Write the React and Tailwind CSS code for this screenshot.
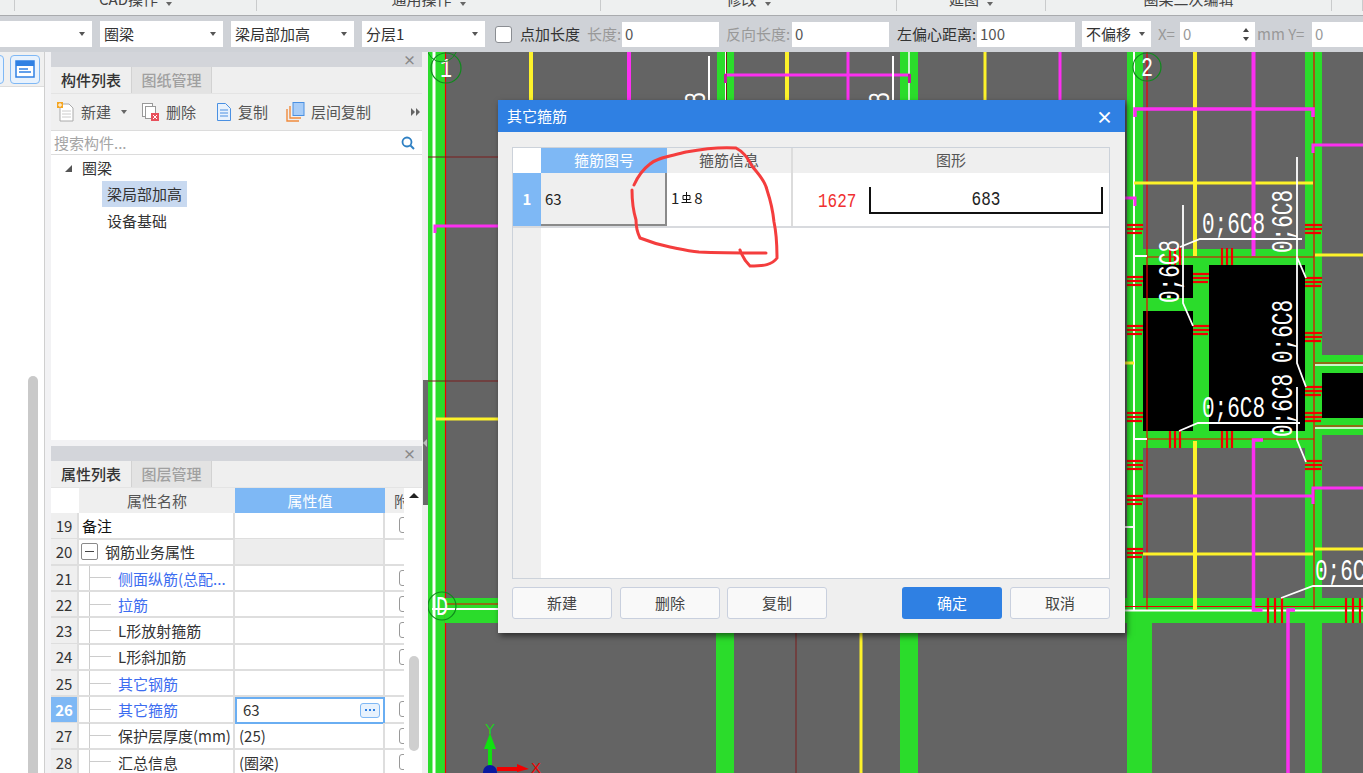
import React from 'react';

const GREEN = '#2bdc2b';
const GREY = '#646464';
const MAGENTA = '#fb2ff0';
const YELLOW = '#fdf22a';
const RED = '#f00000';
const DARKRED = '#7a1c1c';

const ToolSelect = ({ label, width }) => (
  <div className={`${width} h-[26px] bg-white flex items-center justify-between pl-1 pr-[7px] text-[15px] text-[#333] shrink-0`}>
    <span>{label}</span>
    <span className="w-0 h-0 border-x-[3px] border-x-transparent border-t-[4px] border-t-[#555]" />
  </div>
);

const ToolInput = ({ value, width }) => (
  <div className={`${width} h-[25px] bg-white flex items-center pl-[3px] text-[15px] text-[#555] shrink-0`}>{value}</div>
);

const Toolbar = () => (
  <div className="h-[37px] shrink-0 bg-[#cfd2d7] flex items-center border-t border-[#a9abae] text-[15px] whitespace-nowrap">
    <ToolSelect label="" width="w-[92px]" />
    <div className="w-2" />
    <ToolSelect label="圈梁" width="w-[123px]" />
    <div className="w-2" />
    <ToolSelect label="梁局部加高" width="w-[123px]" />
    <div className="w-2" />
    <ToolSelect label="分层1" width="w-[123px]" />
    <div className="w-[10px]" />
    <div className="w-[17px] h-[17px] bg-white border border-[#8a8d92] rounded-[3px] shrink-0" />
    <div className="w-[8px]" />
    <span className="w-[60px] text-[#333] shrink-0">点加长度</span>
    <span className="w-[42px] pl-[7px] text-[#999] shrink-0">长度:</span>
    <ToolInput value="0" width="w-[97px]" />
    <span className="w-[73px] pl-[7px] text-[#999] shrink-0">反向长度:</span>
    <ToolInput value="0" width="w-[97px]" />
    <span className="w-[88px] pl-[8px] text-[#333] shrink-0">左偏心距离:</span>
    <ToolInput value="100" width="w-[98px]" />
    <div className="w-[7px]" />
    <div className="w-[69px] h-[26px] bg-white flex items-center justify-between pl-1 pr-[6px] text-[#333] shrink-0">
      <span>不偏移</span>
      <span className="w-0 h-0 border-x-[3px] border-x-transparent border-t-[4px] border-t-[#555]" />
    </div>
    <span className="w-[29px] pl-[7px] text-[#999] shrink-0">X=</span>
    <div className="w-[75px] h-[25px] bg-white flex items-center justify-between pl-[3px] pr-[6px] text-[#999] shrink-0">
      <span>0</span>
      <span className="flex flex-col gap-[5px]">
        <span className="w-0 h-0 border-x-[3px] border-x-transparent border-b-[4px] border-b-[#444]" />
        <span className="w-0 h-0 border-x-[3px] border-x-transparent border-t-[4px] border-t-[#444]" />
      </span>
    </div>
    <span className="w-[57px] pl-[2px] text-[#999] shrink-0">mm Y=</span>
    <div className="flex-1 h-[25px] bg-white flex items-center pl-[3px] text-[#999]">0</div>
  </div>
);

const Ribbon = () => {
  const groups = [
    { w: 'w-[15px]', label: '' },
    { w: 'w-[242px]', label: 'CAD操作', caret: true },
    { w: 'w-[344px]', label: '通用操作', caret: true },
    { w: 'w-[296px]', label: '修改', caret: true },
    { w: 'w-[149px]', label: '延图', caret: true },
    { w: 'w-[286px]', label: '圈梁二次编辑' },
    { w: 'flex-1', label: '' },
  ];
  return (
    <div className="h-[15px] shrink-0 bg-[#eef0f0] flex overflow-hidden">
      {groups.map((g, i) => (
        <div key={i} className={`${g.w} h-[11px] border-r border-[#c9cbcc] flex justify-center gap-2 text-[15px] text-[#444] leading-[14px] overflow-visible`}>
          <span className="-mt-[8px]">{g.label}</span>
          {g.caret && <span className="w-0 h-0 mt-[2px] border-x-[3px] border-x-transparent border-t-[4px] border-t-[#666]" />}
        </div>
      ))}
    </div>
  );
};

const LeftRail = () => (
  <div className="w-[45px] shrink-0 bg-white border-r border-[#cfcfcf] flex flex-col">
    <div className="h-[35px] shrink-0 bg-[#f0f0f0] border-b border-[#ddd] flex items-center gap-[6px] -ml-[26px]">
      <div className="w-[30px] h-[29px] rounded-[4px] border border-[#7fb8f5] bg-[#e8f2fd] shrink-0" />
      <div className="w-[30px] h-[29px] rounded-[4px] border border-[#7fb8f5] bg-[#e8f2fd] shrink-0 flex items-center justify-center">
        <svg width="20" height="20" viewBox="0 0 20 20">
          <rect x="1" y="2" width="18" height="16" fill="#fff" stroke="#2f80e3" strokeWidth="1.5" />
          <rect x="1" y="2" width="18" height="5" fill="#2f80e3" />
          <path d="M4 10h9M4 13h12" stroke="#2f80e3" strokeWidth="1.5" />
        </svg>
      </div>
    </div>
    <div className="h-[289px] shrink-0" />
    <div className="flex-1 ml-[28px] w-[10px] bg-[#c9c9c9] rounded-t-[5px]" />
  </div>
);

const PanelHeader = () => (
  <div className="h-[15px] shrink-0 bg-[#d3d5da] flex items-center justify-end pr-[6px]">
    <span className="text-[13px] leading-none text-[#888] font-bold">×</span>
  </div>
);

const PanelTabs = ({ active, other }) => (
  <div className="h-[27px] shrink-0 bg-[#efefef] flex border-b border-[#e4e4e4] text-[15px]">
    <div className="w-[80px] flex items-center justify-center text-[#333] font-medium">{active}</div>
    <div className="w-[81px] bg-[#e3e3e3] border-x border-[#d2d2d2] flex items-center justify-center text-[#a0a0a0] font-medium">{other}</div>
  </div>
);

const NewIcon = () => (
  <svg width="18" height="20" viewBox="0 0 18 20">
    <path d="M3 2h9l4 4v13H3z" fill="#fff" stroke="#aaa" />
    <path d="M5 9h9M5 12h9M5 15h9" stroke="#ccc" />
    <rect x="0" y="0" width="6" height="6" fill="#f5a623" />
    <path d="M1 3h4M3 1v4" stroke="#fff" />
  </svg>
);

const DeleteIcon = () => (
  <svg width="18" height="20" viewBox="0 0 18 20">
    <rect x="0.5" y="1.5" width="10" height="13" fill="#fff" stroke="#999" />
    <rect x="3.5" y="4.5" width="10" height="12" fill="#fff" stroke="#999" />
    <rect x="9" y="11" width="8" height="8" fill="#e8505b" />
    <path d="M11 13l4 4M15 13l-4 4" stroke="#fff" />
  </svg>
);

const CopyIcon = () => (
  <svg width="16" height="20" viewBox="0 0 16 20">
    <path d="M1.5 1.5h8l5 5v12h-13z" fill="#e8f2fd" stroke="#4a90e2" />
    <path d="M4 8h8M4 11h8M4 14h8" stroke="#4a90e2" />
  </svg>
);

const FloorCopyIcon = () => (
  <svg width="19" height="20" viewBox="0 0 19 20">
    <path d="M1 7v12h12" fill="none" stroke="#f08a3c" strokeWidth="1.4" />
    <path d="M4 4v12h11" fill="none" stroke="#f08a3c" strokeWidth="1.4" />
    <rect x="7" y="0.5" width="11" height="13" fill="#a9cdf7" stroke="#4a90e2" />
  </svg>
);

const ToolButton = ({ icon, label, width }) => (
  <div className={`${width} flex items-center gap-[6px] shrink-0`}>
    {icon}
    <span>{label}</span>
  </div>
);

const ComponentPanel = () => (
  <div className="h-[388px] shrink-0 bg-white flex flex-col">
    <PanelHeader />
    <PanelTabs active="构件列表" other="图纸管理" />
    <div className="h-[36px] shrink-0 bg-[#f0f0f0] flex items-center pl-[6px] text-[15px] text-[#555] whitespace-nowrap">
      <ToolButton icon={<NewIcon />} label="新建" width="w-[64px]" />
      <span className="w-0 h-0 mr-[15px] border-x-[3px] border-x-transparent border-t-[4px] border-t-[#666]" />
      <ToolButton icon={<DeleteIcon />} label="删除" width="w-[74px]" />
      <ToolButton icon={<CopyIcon />} label="复制" width="w-[70px]" />
      <ToolButton icon={<FloorCopyIcon />} label="层间复制" width="w-[125px]" />
      <span className="flex gap-px">
        <span className="w-0 h-0 border-y-[4px] border-y-transparent border-l-[4px] border-l-[#666]" />
        <span className="w-0 h-0 border-y-[4px] border-y-transparent border-l-[4px] border-l-[#666]" />
      </span>
    </div>
    <div className="h-[25px] shrink-0 bg-white border-y border-[#dcdcdc] flex items-center justify-between pl-[3px] pr-[7px] pt-px text-[15px] text-[#a5a5a5]">
      <span>搜索构件...</span>
      <svg width="14" height="14" viewBox="0 0 14 14">
        <circle cx="6" cy="6" r="4.5" fill="none" stroke="#2f80c3" strokeWidth="1.8" />
        <path d="M9.5 9.5l3.5 3.5" stroke="#2f80c3" strokeWidth="2" />
      </svg>
    </div>
    <div className="flex flex-col text-[15px] text-[#333]">
      <div className="h-[26px] flex items-center pl-[14px] gap-[10px]">
        <span className="w-0 h-0 border-l-[7px] border-l-transparent border-b-[7px] border-b-[#555]" />
        <span>圈梁</span>
      </div>
      <div className="h-[26px] flex items-center pl-[51px]">
        <span className="bg-[#c8d9f0] h-[26px] px-[5px] pt-px flex items-center">梁局部加高</span>
      </div>
      <div className="h-[26px] flex items-center pl-[56px] pt-[2px]">设备基础</div>
    </div>
  </div>
);

const rows = [
  { n: 19, name: '备注', top: true, box: true },
  { n: 20, name: '钢筋业务属性', group: true },
  { n: 21, name: '侧面纵筋(总配...', blue: true, box: true },
  { n: 22, name: '拉筋', blue: true, box: true },
  { n: 23, name: 'L形放射箍筋', box: true },
  { n: 24, name: 'L形斜加筋', box: true },
  { n: 25, name: '其它钢筋', blue: true },
  { n: 26, name: '其它箍筋', blue: true, box: true, active: true, value: '63' },
  { n: 27, name: '保护层厚度(mm)', box: true, value: '(25)' },
  { n: 28, name: '汇总信息', box: true, value: '(圈梁)' },
];

const PropertyRow = ({ row }) => (
  <div className="grid grid-cols-[28px_156px_150px_19px] h-[26.3px] shrink-0 text-[15px] text-[#333] whitespace-nowrap">
    <div className={`flex items-center justify-center pt-[2px] border-b-2 border-r-2 border-[#dedede] ${row.active ? 'bg-[#7eb8f5] text-white font-bold' : 'bg-[#efefef]'}`}>{row.n}</div>
    <div className={`flex items-stretch border-b-2 border-r-2 border-[#dedede] overflow-hidden ${row.blue ? 'text-[#3c6cf0]' : ''}`}>
      {row.top && <span className="pl-[3px] pt-[2px] self-center text-[#111]">{row.name}</span>}
      {row.group && (
        <div className="flex items-center">
          <span className="w-[17px] h-[17px] ml-[2px] mr-[7px] border border-[#8a8a8a] rounded-[2px] flex items-center justify-center">
            <span className="w-[9px] h-px bg-[#444]" />
          </span>
          <span className="pt-[2px]">{row.name}</span>
        </div>
      )}
      {!row.top && !row.group && (
        <div className="flex items-center">
          <div className="w-px self-stretch bg-[#ccc] ml-[10px]" />
          <div className="w-[21px] h-px bg-[#ccc] mr-[7px]" />
          <span className="pt-[2px]">{row.name}</span>
        </div>
      )}
    </div>
    {row.active ? (
      <div className="border-2 border-[#6aaef2] bg-white flex items-center justify-between pl-[6px] pr-[3px]">
        <span>{row.value}</span>
        <span className="w-[20px] h-[15px] rounded-[3px] border border-[#7fb8f5] bg-[#e8f2fd] flex items-center justify-center gap-[2px]">
          <span className="w-[2px] h-[2px] bg-[#2f80e3]" />
          <span className="w-[2px] h-[2px] bg-[#2f80e3]" />
          <span className="w-[2px] h-[2px] bg-[#2f80e3]" />
        </span>
      </div>
    ) : (
      <div className={`flex items-center pl-[4px] pt-[2px] border-b-2 border-r-2 border-[#dedede] ${row.group ? 'bg-[#ededed]' : ''}`}>{row.value}</div>
    )}
    <div className="border-b-2 border-[#dedede] flex items-center overflow-hidden">
      {row.box && <span className="ml-[14px] w-[16px] h-[16px] border border-[#999] rounded-[3px] shrink-0" />}
    </div>
  </div>
);

const PropertyPanel = () => (
  <div className="flex-1 bg-white flex flex-col overflow-hidden">
    <PanelHeader />
    <PanelTabs active="属性列表" other="图层管理" />
    <div className="flex flex-1 overflow-hidden">
      <div className="w-[353px] shrink-0 flex flex-col overflow-hidden">
        <div className="grid grid-cols-[28px_156px_150px_19px] h-[25px] shrink-0 text-[15px]">
          <div className="bg-white" />
          <div className="bg-[#efefef] flex items-center justify-center pt-px text-[#555]">属性名称</div>
          <div className="bg-[#7eb8f5] flex items-center justify-center pt-px text-white">属性值</div>
          <div className="bg-[#efefef] flex items-center pl-[9px] pt-px text-[#555] overflow-hidden whitespace-nowrap">附加</div>
        </div>
        {rows.map((r) => <PropertyRow key={r.n} row={r} />)}
      </div>
      <div className="flex-1 flex flex-col items-center pt-[5px] pl-px">
        <span className="w-0 h-0 border-x-[5px] border-x-transparent border-b-[5px] border-b-[#222]" />
        <div className="h-[158px] shrink-0" />
        <div className="w-[10px] h-[95px] rounded-[5px] bg-[#cfcfcf]" />
      </div>
    </div>
  </div>
);

const HLine = ({ x1, x2, y, c, w = 3 }) => <line x1={x1} x2={x2} y1={y} y2={y} stroke={c} strokeWidth={w} />;
const VLine = ({ x, y1, y2, c, w = 3 }) => <line x1={x} x2={x} y1={y1} y2={y2} stroke={c} strokeWidth={w} />;

// triple red ticks crossing the beams
const HatchH = ({ x1, x2, y }) => (
  <g>
    <HLine x1={x1} x2={x2} y={y} c={RED} w={2.2} />
    <HLine x1={x1} x2={x2} y={y + 4} c={RED} w={2.2} />
    <HLine x1={x1} x2={x2 - 1} y={y + 8} c={RED} w={2.2} />
  </g>
);
const HatchV = ({ x, y1, y2, gap = 5 }) => (
  <g>
    <VLine x={x} y1={y1} y2={y2} c={RED} w={2.2} />
    <VLine x={x + gap} y1={y1} y2={y2} c={RED} w={2.2} />
    <VLine x={x + gap * 2} y1={y1} y2={y2} c={RED} w={2.2} />
  </g>
);

const CadLabel = ({ x, y, rotate }) => (
  <text
    transform={`translate(${x},${y})${rotate ? ' rotate(-90)' : ''} scale(1,1.4)`}
    fill="#fff"
    fontSize="21"
    fontFamily="'Liberation Mono', monospace"
  >
    0;6C8
  </text>
);

const AxisCircle = ({ cx, cy, r, label }) => (
  <g>
    <circle cx={cx} cy={cy} r={r} fill="none" stroke="#0f8a1c" strokeWidth="1.2" />
    <text transform={`translate(${cx},${cy + 9}) scale(1,1.4)`} textAnchor="middle" fill="#fff" fontSize="20" fontFamily="'Liberation Mono', monospace">{label}</text>
  </g>
);

const CadCanvas = () => (
  <svg className="absolute inset-0" width="935" height="721" viewBox="428 52 935 721">
    <rect x="428" y="52" width="935" height="721" fill={GREY} />

    {/* left wall */}
    <rect x="428" y="52" width="17" height="721" fill={GREEN} />
    <VLine x={434} y1={52} y2={773} c="#fff" />
    <VLine x={445.5} y1={52} y2={773} c={RED} w={1.2} />
    <HLine x1={428} x2={498} y={157} c={DARKRED} w={1} />
    <HLine x1={428} x2={498} y={381} c={DARKRED} w={1} />
    <path d="M435 233v-7h65" fill="none" stroke={MAGENTA} strokeWidth="3" />
    <HLine x1={436} x2={498} y={419} c={YELLOW} />
    <rect x="445" y="598" width="60" height="25" fill={GREEN} />
    <HLine x1={445} x2={505} y={604} c={RED} w={1} />
    <HLine x1={432} x2={505} y={609} c="#fff" w={2} />
    <AxisCircle cx={446} cy={68} r={15} label="1" />
    <circle cx={442} cy={47} r={15} fill="none" stroke="#0f8a1c" />
    <AxisCircle cx={442} cy={606} r={14} label="D" />

    {/* top strip and lower columns */}
    <rect x="717" y="52" width="17" height="60" fill={GREEN} />
    <rect x="900" y="52" width="18" height="60" fill={GREEN} />
    <VLine x={725.5} y1={52} y2={110} c="#fff" w={1} />
    <VLine x={726.5} y1={52} y2={110} c={DARKRED} w={1} />
    <VLine x={909} y1={52} y2={110} c="#fff" w={1.5} />
    <VLine x={531} y1={52} y2={110} c={YELLOW} w={4} />
    <VLine x={629} y1={52} y2={110} c={MAGENTA} w={4} />
    <VLine x={787} y1={52} y2={110} c={YELLOW} w={4} />
    <VLine x={848} y1={52} y2={110} c={MAGENTA} w={3} />
    <VLine x={985} y1={52} y2={110} c={YELLOW} w={3} />
    <VLine x={1060} y1={52} y2={110} c={MAGENTA} w={3} />
    <HLine x1={725} x2={910} y={75} c={MAGENTA} />
    <VLine x={725.5} y1={74} y2={83} c="#c01aa0" />
    <VLine x={909.5} y1={74} y2={83} c="#c01aa0" />
    <VLine x={709} y1={56} y2={110} c="#fff" w={2} />
    <VLine x={893} y1={56} y2={110} c="#fff" w={2} />
    <CadLabel x={705} y={155} rotate />
    <CadLabel x={889} y={155} rotate />

    <rect x="716" y="625" width="18" height="148" fill={GREEN} />
    <rect x="900" y="625" width="18" height="148" fill={GREEN} />
    <VLine x={796} y1={625} y2={773} c={DARKRED} w={1} />
    <VLine x={861} y1={625} y2={773} c={YELLOW} w={3} />

    {/* right block */}
    <rect x="1127" y="52" width="16" height="721" fill={GREEN} />
    <rect x="1305" y="52" width="17" height="721" fill={GREEN} />
    <rect x="1143" y="249" width="162" height="199" fill={GREEN} />
    <rect x="1125" y="598" width="238" height="25" fill={GREEN} />
    <rect x="1143" y="623" width="9" height="150" fill={GREEN} />
    <rect x="1322" y="355" width="41" height="80" fill={GREEN} />
    <rect x="1143" y="265" width="50" height="33" fill="#000" />
    <rect x="1143" y="311" width="50" height="120" fill="#000" />
    <rect x="1209" y="265" width="96" height="166" fill="#000" />
    <rect x="1322" y="373" width="41" height="45" fill="#000" />

    <VLine x={1134} y1={52} y2={611} c="#fff" w={2} />
    <VLine x={1147} y1={52} y2={610} c={RED} w={1.2} />
    <VLine x={1314} y1={52} y2={610} c={RED} w={1.2} />
    <HLine x1={1134} x2={1147} y={256} c="#fff" w={2} />
    <HLine x1={1134} x2={1147} y={439} c="#fff" w={2} />
    <HLine x1={1125} x2={1134} y={527} c="#fff" w={2} />
    <HLine x1={1147} x2={1314} y={257} c={RED} w={1.2} />
    <HLine x1={1147} x2={1314} y={439} c={RED} w={1.2} />
    <HLine x1={1125} x2={1363} y={606.5} c={RED} w={1.2} />
    <HLine x1={1125} x2={1363} y={610.5} c="#fff" w={2} />
    <HLine x1={1315} x2={1363} y={363} c={RED} w={1} />
    <HLine x1={1315} x2={1363} y={365} c="#fff" w={1.5} />
    <HLine x1={1315} x2={1363} y={426} c={RED} w={1} />
    <HLine x1={1315} x2={1363} y={428} c="#fff" w={1.5} />

    {/* yellow */}
    <VLine x={1195} y1={52} y2={256} c={YELLOW} w={4} />
    <VLine x={1195} y1={441} y2={610} c={YELLOW} w={4} />
    <HLine x1={1134} x2={1313} y={183} c={YELLOW} />
    <HLine x1={1143} x2={1313} y={554} c={YELLOW} />
    <HLine x1={1315} x2={1363} y={255} c={YELLOW} />
    <HLine x1={1315} x2={1363} y={549} c={YELLOW} />
    <HLine x1={1125} x2={1134} y={363} c={YELLOW} />

    {/* magenta */}
    <VLine x={1253.5} y1={52} y2={256} c={MAGENTA} w={4} />
    <path d="M1135 117v-8h178v8" fill="none" stroke={MAGENTA} strokeWidth="3.5" />
    <path d="M1313 153v-8h50" fill="none" stroke={MAGENTA} strokeWidth="3" />
    <path d="M1125 198h10v8" fill="none" stroke={MAGENTA} strokeWidth="3" />
    <path d="M1263 440h-9.500v170h9" fill="none" stroke={MAGENTA} strokeWidth="3.500" />
    <HLine x1={1143} x2={1313} y={496} c={MAGENTA} />
    <path d="M1313 504v-16h50" fill="none" stroke={MAGENTA} strokeWidth="3" />
    <path d="M1295 610h-7v163" fill="none" stroke={MAGENTA} strokeWidth="3.500" />

    {/* rebar ticks */}
    {[225, 277, 326, 413, 461, 496, 549].map((y) => <HatchH key={y} x1={1127} x2={1143} y={y} />)}
    {[225, 278, 333, 387, 413, 461].map((y) => <HatchH key={y} x1={1305} x2={1322} y={y} />)}
    {[274, 326].map((y) => <HatchH key={y} x1={1193} x2={1209} y={y} />)}
    <HatchV x={1170} y1={248} y2={265} />
    <HatchV x={1222} y1={248} y2={265} />
    <HatchV x={1170} y1={431} y2={448} />
    <HatchV x={1222} y1={431} y2={448} />
    <HatchV x={1268} y1={598} y2={623} gap={7} />
    <HatchV x={1346} y1={598} y2={623} gap={7} />

    {/* leaders and bar marks */}
    <path d="M1183 205v98l10 23" fill="none" stroke="#fff" strokeWidth="1.8" />
    <path d="M1180 247l20-8h102" fill="none" stroke="#fff" strokeWidth="1.8" />
    <path d="M1297 157v100l9 21" fill="none" stroke="#fff" strokeWidth="1.8" />
    <path d="M1297 257v106l9 24" fill="none" stroke="#fff" strokeWidth="1.8" />
    <path d="M1297 387v53l9 22" fill="none" stroke="#fff" strokeWidth="1.8" />
    <path d="M1179 431l19-8h102" fill="none" stroke="#fff" strokeWidth="1.8" />
    <path d="M1281 598l32-12h50" fill="none" stroke="#fff" strokeWidth="1.8" />
    <CadLabel x={1202} y={233} />
    <CadLabel x={1202} y={417} />
    <CadLabel x={1315} y={580} />
    <CadLabel x={1292} y={253} rotate />
    <CadLabel x={1179} y={303} rotate />
    <CadLabel x={1292} y={363} rotate />
    <CadLabel x={1292} y={437} rotate />
    <AxisCircle cx={1147} cy={67} r={14} label="2" />

    {/* ucs icon */}
    <rect x="488" y="745" width="4" height="22" fill="#10e010" />
    <path d="M490 733l-6 16h12z" fill="#10e010" />
    <path d="M497 767h20v-3l12 5-12 3v-1h-20z" fill={RED} />
    <circle cx="490" cy="772" r="7" fill="#0a1aa0" />
    <text x="490" y="734" textAnchor="middle" fill="#1fd01f" fontSize="15" fontFamily="'Liberation Sans', sans-serif">Y</text>
    <text x="536" y="773" textAnchor="middle" fill={RED} fontSize="15" fontFamily="'Liberation Sans', sans-serif">X</text>
  </svg>
);

const DialogButton = ({ children, primary, className = '' }) => (
  <div className={`w-[100px] h-[32px] rounded-[3px] flex items-center justify-center text-[15px] shrink-0 ${primary ? 'bg-[#2f80e3] text-white' : 'bg-[#f9f9f9] border border-[#c9d0de] text-[#444]'} ${className}`}>
    {children}
  </div>
);

const RebarDialog = () => (
  <div className="absolute left-[70px] top-[48px] w-[627px] h-[533px] bg-[#efefef] shadow-[2px_3px_6px_rgba(0,0,0,0.55)] flex flex-col">
    <div className="h-[32px] shrink-0 bg-[#2f80e3] flex items-center justify-between pl-[9px] pr-[12px] text-white text-[15px]">
      <span>其它箍筋</span>
      <span className="text-[17px] leading-none font-bold">×</span>
    </div>
    <div className="mt-[15px] ml-[14px] mr-[15px] h-[432px] shrink-0 border border-[#ccd2da] bg-white flex flex-col">
      <div className="grid grid-cols-[28px_126px_126px_1fr] h-[25px] shrink-0 text-[15px] text-[#555]">
        <div className="bg-white" />
        <div className="bg-[#7eb8f5] text-white flex items-center justify-center">箍筋图号</div>
        <div className="bg-[#efefef] border-r-2 border-[#dcdcdc] flex items-center justify-center">箍筋信息</div>
        <div className="bg-[#efefef] flex items-center justify-center">图形</div>
      </div>
      <div className="grid grid-cols-[28px_126px_126px_1fr] h-[55px] shrink-0 text-[15px] text-[#222] border-b-2 border-[#d8dade]">
        <div className="bg-[#7eb8f5] text-white font-bold flex items-center justify-center">1</div>
        <div className="bg-[#efefef] border-r-2 border-b-2 border-[#8a8a8a] flex items-center pl-[4px] pt-[2px]">63</div>
        <div className="border-r-2 border-[#dcdcdc] flex items-center pl-[4px] pb-[3px]">
          <span>1</span>
          <svg width="11" height="13" viewBox="0 0 11 13" className="mx-[2px]">
            <path d="M5.500 0v11M2 3.500h7M2 7.500h7M2 3.500v4M9 3.500v4M0.500 10.500h10" fill="none" stroke="#111" strokeWidth="1" />
          </svg>
          <span>8</span>
        </div>
        <div className="flex items-center pl-[25px] pr-[6px] gap-[11px] font-['Liberation_Mono',monospace] text-[16px]">
          <span className="text-[#f03030] w-[40px] shrink-0 scale-y-[1.3] mt-[5px]">1627</span>
          <div className="flex-1 h-[27px] mt-[2px] border-x-2 border-b-2 border-[#111] flex justify-center pt-[1px] text-[#222]">
            <span className="scale-y-[1.3]">683</span>
          </div>
        </div>
      </div>
      <div className="flex-1 flex">
        <div className="w-[28px] bg-[#efefef]" />
      </div>
    </div>
    <div className="mt-[8px] ml-[14px] mr-[15px] flex items-center">
      <DialogButton>新建</DialogButton>
      <DialogButton className="ml-[8px]">删除</DialogButton>
      <DialogButton className="ml-[7px]">复制</DialogButton>
      <div className="flex-1" />
      <DialogButton primary>确定</DialogButton>
      <DialogButton className="ml-[8px]">取消</DialogButton>
    </div>
  </div>
);

const App = () => (
  <div className="relative w-[1363px] h-[773px] overflow-hidden flex flex-col bg-white font-['Noto_Sans_CJK_SC','Liberation_Sans',sans-serif]">
    <Ribbon />
    <Toolbar />
    <div className="flex flex-1 overflow-hidden">
      <LeftRail />
      <div className="w-[6px] shrink-0 bg-[#f2f2f4]" />
      <div className="w-[371px] shrink-0 flex flex-col gap-[6px] bg-[#f2f2f4]">
        <ComponentPanel />
        <PropertyPanel />
      </div>
      <div className="w-[6px] shrink-0 bg-[#f0f0f0] flex flex-col">
        <div className="h-[328px] shrink-0" />
        <div className="h-[125px] shrink-0 ml-px bg-[#6a6a6a] flex items-center">
          <span className="w-0 h-0 border-y-[4px] border-y-transparent border-r-[4px] border-r-[#bbb]" />
        </div>
      </div>
      <div className="relative flex-1">
        <CadCanvas />
        <RebarDialog />
      </div>
    </div>
    {/* hand drawn mark on top of the dialog */}
    <svg className="absolute inset-0 pointer-events-none" width="1363" height="773" viewBox="0 0 1363 773">
      <path
        d="M634 185 C638 176 642 170 650 164 C658 157 672 156 686 152 C702 149 722 147 736 148 C744 152 748 158 752 166 C758 174 765 180 767 190 C771 202 773 212 774 222 C777 236 777 250 777 258 C772 265 764 266 750 266 C746 262 742 256 740 250 M766 253 C745 253 720 253 699 252 C688 251 680 249 670 247 C660 245 650 242 640 238 C637 232 636 226 636 220 C633 210 632 200 632 190"
        fill="none"
        stroke="#f43d3d"
        strokeWidth="3"
        strokeLinecap="round"
      />
    </svg>
  </div>
);

export default App;
